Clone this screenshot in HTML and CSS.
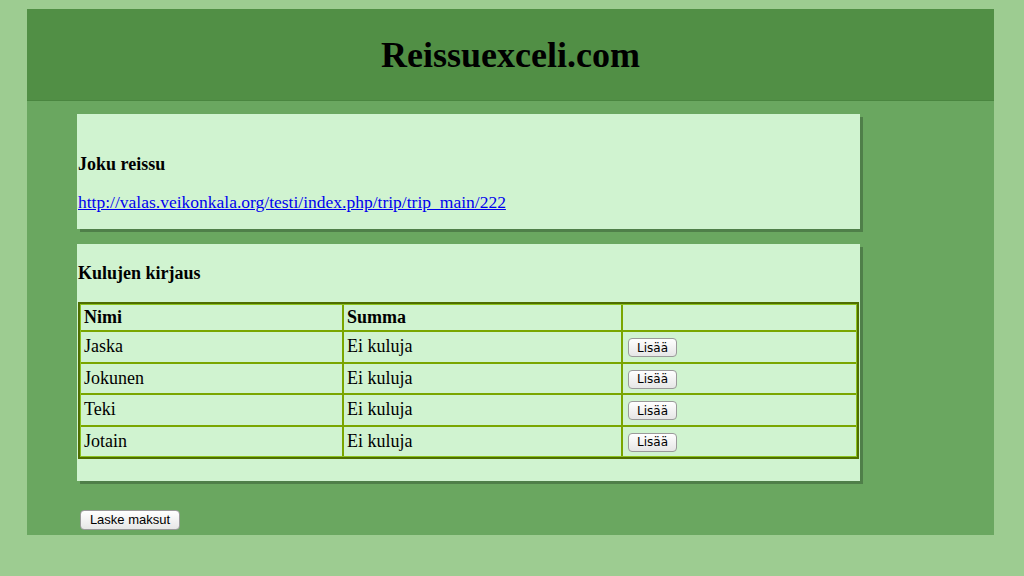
FILE: index.html
```html
<!DOCTYPE html>
<html>
<head>
<meta charset="utf-8">
<link rel="stylesheet" href="styles.css">
</head>
<body>
<div class="page">
  <header class="header"><h1>Reissuexceli.com</h1></header>
  <main class="main">
    <section class="box box-trip">
      <h3>Joku reissu</h3>
      <a href="#">http://valas.veikonkala.org/testi/index.php/trip/trip_main/222</a>
    </section>
    <section class="box box-costs">
      <h3>Kulujen kirjaus</h3>
      <table class="costs">
        <tr><th class="c1">Nimi</th><th class="c2">Summa</th><th class="c3"></th></tr>
        <tr><td>Jaska</td><td>Ei kuluja</td><td><button class="btn">Lisää</button></td></tr>
        <tr><td>Jokunen</td><td>Ei kuluja</td><td><button class="btn">Lisää</button></td></tr>
        <tr><td>Teki</td><td>Ei kuluja</td><td><button class="btn">Lisää</button></td></tr>
        <tr><td>Jotain</td><td>Ei kuluja</td><td><button class="btn">Lisää</button></td></tr>
      </table>
    </section>
    <div class="actions"><button class="btn btn-big">Laske maksut</button></div>
  </main>
</div>
</body>
</html>
```
FILE: styles.css
```css
html, body { margin: 0; padding: 0; }
body {
  background: #9dcc91;
  font-family: "Liberation Serif", "Times New Roman", serif;
  color: #000;
  padding: 9px 30px 0 27px;
}
.page {
  width: 967px;
  background: #6aa760;
}
.header {
  background: #518f45;
  height: 91px;
  border-bottom: 1px solid #4a8640;
  display: flex;
  align-items: center;
  justify-content: center;
}
.header h1 {
  margin: 0;
  font-size: 36px;
  font-weight: bold;
}
.main {
  padding: 13px 0 0 50px;
  height: 434px;
  box-sizing: border-box;
}
.box {
  width: 783px;
  background: #d0f3d0;
  box-shadow: 3px 3px 0 #4f7f49;
  padding: 0 0 0 1px;
  box-sizing: border-box;
}
.box h3 {
  margin: 0;
  font-size: 18px;
  font-weight: bold;
}
.box-trip {
  height: 115px;
  padding-top: 40px;
}
.box-trip h3 { margin-bottom: 17px; }
.box-trip a {
  color: #0000ee;
  font-size: 17.5px;
  text-decoration: underline;
}
.box-costs {
  margin-top: 15px;
  height: 237px;
  padding-top: 19px;
}
.box-costs h3 { margin-bottom: 18px; }
.costs {
  width: 781px;
  border-collapse: separate;
  border-spacing: 0;
  border: 2px solid #4f6e00;
  outline: 1px solid #8cc21e;
  outline-offset: -3px;
  font-size: 18px;
}
.costs th, .costs td {
  border: 1px solid #7aa600;
  padding: 0 3px;
  text-align: left;
  box-sizing: border-box;
}
.costs td { height: 31.5px; }
.costs th { height: 27px; }
.c1 { width: 263px; }
.c2 { width: 279px; }
.btn {
  font-family: "DejaVu Sans", "Liberation Sans", sans-serif;
  font-size: 12px;
  background: linear-gradient(#ffffff, #e6e6e6);
  border: 1px solid #9a9a9a;
  border-radius: 4px;
  padding: 0 8px;
  height: 19px;
  line-height: 16px;
  color: #000;
  white-space: nowrap;
  margin-left: 2px;
  vertical-align: middle;
}
.actions {
  padding-top: 29px;
  padding-left: 3px;
}
.btn-big {
  font-family: "Liberation Sans", "DejaVu Sans", sans-serif;
  font-size: 13px;
  padding: 1px 8px;
  width: 100px;
  height: 20px;
  margin-left: 0;
}
```
